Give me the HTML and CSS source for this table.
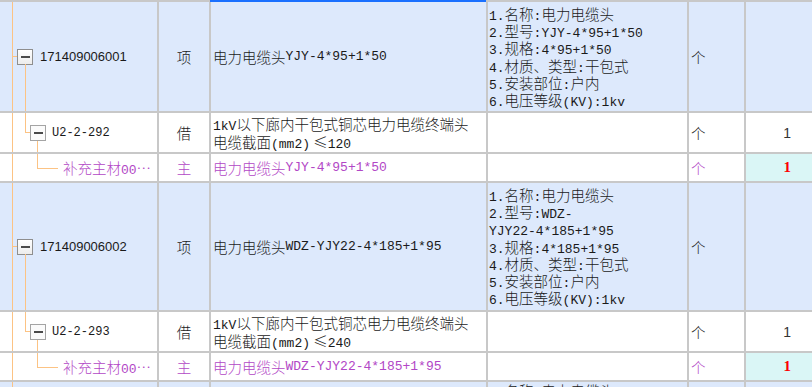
FILE: index.html
```html
<!DOCTYPE html>
<html lang="zh">
<head>
<meta charset="utf-8">
<title>清单</title>
<link rel="stylesheet" href="styles.css">
</head>
<body>
<div class="grid">
  <div class="row item six">
    <div class="cell code lvl0">
      <i class="ln v0"></i><i class="ln tick0"></i><i class="ln v1-down"></i>
      <span class="tog"></span><span class="num">171409006001</span>
    </div>
    <div class="cell type">项</div>
    <div class="cell name sel">电力电缆头<span class="m">YJY-4*95+1*50</span></div>
    <div class="cell feat">
      <div class="fl"><span class="m">1.</span>名称<span class="m">:</span>电力电缆头</div>
      <div class="fl"><span class="m">2.</span>型号<span class="m">:YJY-4*95+1*50</span></div>
      <div class="fl"><span class="m">3.</span>规格<span class="m">:4*95+1*50</span></div>
      <div class="fl"><span class="m">4.</span>材质、类型<span class="m">:</span>干包式</div>
      <div class="fl"><span class="m">5.</span>安装部位<span class="m">:</span>户内</div>
      <div class="fl"><span class="m">6.</span>电压等级<span class="m">(KV):1kv</span></div>
    </div>
    <div class="cell unit">个</div>
    <div class="cell qty"></div>
  </div>

  <div class="row quota">
    <div class="cell code lvl1">
      <i class="ln v0"></i><i class="ln v1-up"></i><i class="ln tick1"></i><i class="ln v2-down"></i>
      <span class="tog light"></span><span class="m qcode">U2-2-292</span>
    </div>
    <div class="cell type">借</div>
    <div class="cell name two"><div class="nl"><span class="m">1kV</span>以下廊内干包式铜芯电力电缆终端头</div><div class="nl">电缆截面<span class="m">(mm2)</span> ≤<span class="m">120</span></div></div>
    <div class="cell feat"></div>
    <div class="cell unit">个</div>
    <div class="cell qty">1</div>
  </div>

  <div class="row mat">
    <div class="cell code lvl2">
      <i class="ln v0"></i><i class="ln v2-up"></i><i class="ln tick2"></i>
      <span>补充主材<span class="m">00</span>…</span>
    </div>
    <div class="cell type">主</div>
    <div class="cell name">电力电缆头<span class="m">YJY-4*95+1*50</span></div>
    <div class="cell feat"></div>
    <div class="cell unit">个</div>
    <div class="cell qty hl">1</div>
  </div>

  <div class="row item seven">
    <div class="cell code lvl0">
      <i class="ln v0"></i><i class="ln tick0"></i><i class="ln v1-down"></i>
      <span class="tog"></span><span class="num">171409006002</span>
    </div>
    <div class="cell type">项</div>
    <div class="cell name">电力电缆头<span class="m">WDZ-YJY22-4*185+1*95</span></div>
    <div class="cell feat">
      <div class="fl"><span class="m">1.</span>名称<span class="m">:</span>电力电缆头</div>
      <div class="fl"><span class="m">2.</span>型号<span class="m">:WDZ-</span></div>
      <div class="fl"><span class="m">YJY22-4*185+1*95</span></div>
      <div class="fl"><span class="m">3.</span>规格<span class="m">:4*185+1*95</span></div>
      <div class="fl"><span class="m">4.</span>材质、类型<span class="m">:</span>干包式</div>
      <div class="fl"><span class="m">5.</span>安装部位<span class="m">:</span>户内</div>
      <div class="fl"><span class="m">6.</span>电压等级<span class="m">(KV):1kv</span></div>
    </div>
    <div class="cell unit">个</div>
    <div class="cell qty"></div>
  </div>

  <div class="row quota">
    <div class="cell code lvl1">
      <i class="ln v0"></i><i class="ln v1-up"></i><i class="ln tick1"></i><i class="ln v2-down"></i>
      <span class="tog light"></span><span class="m qcode">U2-2-293</span>
    </div>
    <div class="cell type">借</div>
    <div class="cell name two"><div class="nl"><span class="m">1kV</span>以下廊内干包式铜芯电力电缆终端头</div><div class="nl">电缆截面<span class="m">(mm2)</span> ≤<span class="m">240</span></div></div>
    <div class="cell feat"></div>
    <div class="cell unit">个</div>
    <div class="cell qty">1</div>
  </div>

  <div class="row mat">
    <div class="cell code lvl2">
      <i class="ln v0"></i><i class="ln v2-up"></i><i class="ln tick2"></i>
      <span>补充主材<span class="m">00</span>…</span>
    </div>
    <div class="cell type">主</div>
    <div class="cell name">电力电缆头<span class="m">WDZ-YJY22-4*185+1*95</span></div>
    <div class="cell feat"></div>
    <div class="cell unit">个</div>
    <div class="cell qty hl">1</div>
  </div>

  <div class="row item six">
    <div class="cell code lvl0">
      <i class="ln v0"></i><i class="ln tick0"></i><i class="ln v1-down"></i>
      <span class="tog"></span><span class="num">171409006003</span>
    </div>
    <div class="cell type">项</div>
    <div class="cell name">电力电缆头</div>
    <div class="cell feat tight">
      <div class="fl"><span class="m">1.</span>名称<span class="m">:</span>电力电缆头</div>
    </div>
    <div class="cell unit">个</div>
    <div class="cell qty"></div>
  </div>
</div>
</body>
</html>
```
FILE: styles.css
```css
html, body {
  margin: 0;
  overflow: hidden;
  background: #ffffff;
}
body {
  font-family: "Noto Sans CJK SC", sans-serif;
  font-size: 14.5px;
  font-weight: 300;
  color: #1a1a1a;
}
.grid {
  width: 812px;
  border-top: 2px solid #c8c8c8;
}
.row {
  box-sizing: border-box;
  display: grid;
  grid-template-columns: 159px 52px 277px 201px 57px 66px;
  border-bottom: 2px solid #c8c8c8;
}
.item { background: #dde9fc; }
.six { height: 111px; }
.seven { height: 129px; }
.quota { height: 41px; }
.mat { height: 29px; }
.cell {
  box-sizing: border-box;
  border-right: 2px solid #c8c8c8;
  display: flex;
  align-items: center;
  position: relative;
  white-space: nowrap;
  overflow: hidden;
}
.cell:last-child { border-right: 0; }
.m {
  font-family: "Liberation Mono", monospace;
  font-size: 13px;
  font-weight: 400;
}
.num {
  font-family: "Liberation Sans", sans-serif;
  font-size: 13px;
  font-weight: 400;
  margin-left: 7px;
}
.qcode {
  font-size: 12px;
  margin-left: 6px;
}
.lvl0 { padding-left: 17px; }
.lvl1 { padding-left: 30px; }
.lvl2 { padding-left: 63px; }
.tog {
  box-sizing: border-box;
  width: 16px;
  height: 16px;
  border: 1px solid #8e8e8e;
  background: linear-gradient(#ffffff, #ececec);
  display: flex;
  align-items: center;
  justify-content: center;
  flex: none;
}
.tog.light { border-color: #a4a4a4; background: #fbfbfb; }
.tog::after {
  content: "";
  width: 9px;
  height: 2px;
  background: #4a4a4a;
}
.ln {
  position: absolute;
  background: #fcc384;
}
.v0 { left: 12px; top: 0; bottom: 0; width: 1px; }
.tick0 { left: 12px; width: 5px; top: calc(50% - 1px); height: 1px; }
.v1-down { left: 25px; top: calc(50% + 7px); bottom: 0; width: 1px; }
.v1-up { left: 25px; top: 0; height: calc(50% - 1px); width: 1px; }
.tick1 { left: 25px; width: 5px; top: calc(50% - 1px); height: 1px; }
.v2-down { left: 37px; top: calc(50% + 8px); bottom: 0; width: 1px; }
.v2-up { left: 37px; top: 0; height: 50%; width: 1px; }
.tick2 { left: 37px; width: 21px; top: 50%; height: 1px; }
.type { justify-content: center; }
.name { padding-left: 2px; }
.name.two {
  flex-direction: column;
  align-items: flex-start;
  justify-content: center;
}
.nl {
  height: 17.5px;
  line-height: 17.5px;
}
.sel { overflow: visible; }
.sel::before {
  content: "";
  position: absolute;
  left: -1px;
  right: 0;
  top: -2px;
  height: 2px;
  background: #1a70ff;
}
.feat {
  display: block;
  padding: 3px 2px 0 1px;
}
.feat.tight { padding-top: 0; }
.fl {
  height: 17.2px;
  line-height: 17.2px;
}
.unit { padding-left: 2px; }
.qty {
  justify-content: flex-end;
  padding-right: 21px;
  font-family: "Liberation Sans", sans-serif;
  font-size: 14px;
  font-weight: 400;
  color: #333333;
}
.qty.hl {
  background: #daf6f6;
  color: #ff0000;
  font-family: "Liberation Serif", serif;
  font-weight: bold;
  font-size: 15px;
}
.mat .code, .mat .type, .mat .name, .mat .unit { color: #b247c6; }
```
